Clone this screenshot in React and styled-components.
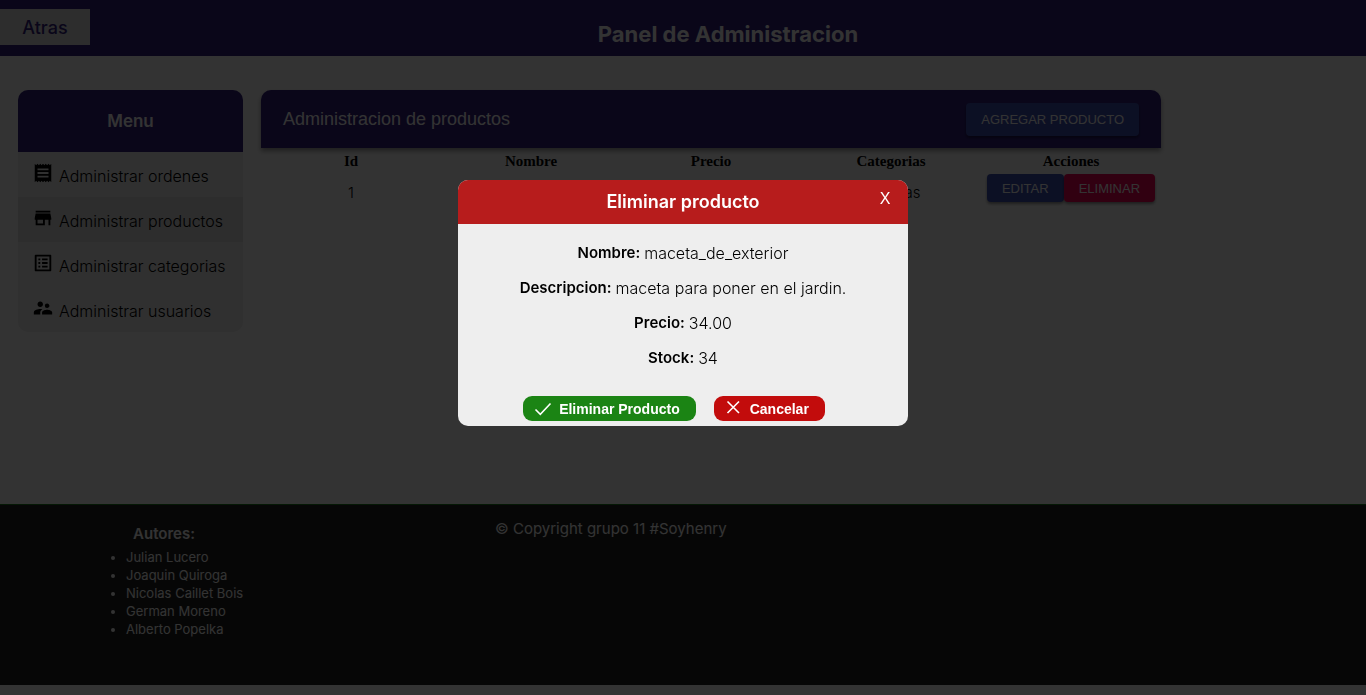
import React, { useState } from "react";
import styled, { createGlobalStyle, css } from "styled-components";
import { MdReceipt, MdStore, MdListAlt, MdSupervisorAccount } from "react-icons/md";

const indigo = "#33207f";
const geometric = '"Inter", "Open Sans", sans-serif';
const grotesque = '"Liberation Sans", Arial, sans-serif';

const GlobalStyle = createGlobalStyle`
  *, *::before, *::after { box-sizing: border-box; }
  body {
    margin: 0;
    background: #fff;
    color: #000;
    font-family: ${geometric};
    font-size: 15px;
    font-weight: 300;
  }
  h1, h2, h3, p, ul, dl, dd { margin: 0; padding: 0; }
  button { border: 0; padding: 0; margin: 0; cursor: pointer; }
`;

const Page = styled.div`
  display: flex;
  flex-direction: column;
  min-height: 100vh;
  padding-bottom: 10px;
`;

const TopBar = styled.header`
  display: flex;
  align-items: flex-start;
  height: 56px;
  padding-top: 9px;
  background: ${indigo};
`;

const BackButton = styled.button`
  flex: none;
  width: 90px;
  height: 36px;
  background: #e0e0e0;
  color: ${indigo};
  font-family: ${geometric};
  font-size: 18px;
  font-weight: 500;
`;

const PageTitle = styled.h1`
  flex: 1;
  padding-top: 9px;
  color: #fff;
  font-size: 22px;
  line-height: 32px;
  font-weight: 700;
  text-align: center;
`;

const Main = styled.main`
  display: flex;
  flex: 1;
  align-items: flex-start;
  gap: 18px;
  padding: 34px 18px;
`;

const Sidebar = styled.nav`
  flex: none;
  width: 225px;
  overflow: hidden;
  border-radius: 10px;
  background: #eee;
`;

const SidebarTitle = styled.h2`
  background: ${indigo};
  color: #fff;
  font-size: 17px;
  line-height: 62px;
  font-weight: 600;
  text-align: center;
`;

const MenuList = styled.ul`
  list-style: none;
`;

const MenuLink = styled.a`
  display: flex;
  align-items: center;
  gap: 5px;
  height: 45px;
  padding-left: 14px;
  background: ${(p) => (p.$active ? "#dedede" : "transparent")};
  color: #000;
  font-size: 16px;
  text-decoration: none;

  svg {
    flex: none;
    margin-bottom: 3px;
    font-size: 22px;
  }
  span { padding-top: 2px; }
`;

const Panel = styled.section`
  flex: 0 1 900px;
`;

const PanelHeader = styled.div`
  display: flex;
  align-items: center;
  justify-content: space-between;
  height: 58px;
  padding: 0 22px;
  border-radius: 10px 10px 0 0;
  background: ${indigo};
  box-shadow: 0 3px 5px rgba(0, 0, 0, 0.4);
`;

const PanelTitle = styled.h2`
  color: #fff;
  font-family: ${grotesque};
  font-size: 18px;
  font-weight: 400;
`;

const ActionButton = styled.button`
  height: ${(p) => (p.$large ? "33px" : "28px")};
  padding: 0 15px;
  border-radius: 4px;
  background: ${(p) => (p.$danger ? "#f50057" : "#3f51b5")};
  color: #fff;
  font-family: ${grotesque};
  font-size: 13px;
  text-transform: uppercase;
  box-shadow: 0 2px 3px rgba(0, 0, 0, 0.4);
`;

const Table = styled.table`
  width: 100%;
  table-layout: fixed;
  border-collapse: collapse;

  th {
    height: 26px;
    padding: 0;
    font-family: "Liberation Serif", serif;
    font-size: 15px;
    font-weight: 700;
  }
  td {
    height: 32px;
    padding: 0;
    text-align: center;
    vertical-align: top;
    line-height: 38px;
  }
`;

const RowActions = styled.div`
  display: flex;
  justify-content: center;
`;

const Footer = styled.footer`
  display: flex;
  height: 181px;
  border-top: 1px solid #1b7a1b;
  background: #212121;
  color: #fff;
  font-weight: 400;
`;

const Authors = styled.section`
  width: 328px;
  padding: 17px 0 0 108px;

  h3 {
    width: 112px;
    font-size: 15px;
    line-height: 24px;
    font-weight: 600;
    text-align: center;
  }
  ul {
    padding: 2px 0 0 18px;
    font-size: 13px;
    line-height: 18px;
  }
`;

const Copyright = styled.p`
  padding: 12px 0 0 167px;
  line-height: 24px;
`;

const Backdrop = styled.div`
  position: fixed;
  inset: 0;
  display: flex;
  align-items: flex-start;
  justify-content: center;
  padding-top: 180px;
  background: rgba(0, 0, 0, 0.8);
`;

const Dialog = styled.section`
  position: relative;
  width: 450px;
  overflow: hidden;
  border-radius: 10px;
  background: #eee;
`;

const DialogTitle = styled.h2`
  background: #b71c1c;
  color: #fff;
  font-size: 18px;
  line-height: 44px;
  font-weight: 600;
  text-align: center;
`;

const CloseButton = styled.button`
  position: absolute;
  top: 9px;
  right: 13px;
  width: 20px;
  height: 20px;
  background: transparent;
  color: #fff;
  font-family: ${grotesque};
  font-size: 16px;
`;

const Details = styled.dl`
  display: grid;
  gap: 11px;
  padding: 17px 0 26px;
  line-height: 24px;

  div {
    display: flex;
    justify-content: center;
    gap: 4px;
  }
  dt { font-weight: 600; }
  dd { font-size: 16px; }
`;

const DialogActions = styled.div`
  display: flex;
  justify-content: center;
  gap: 18px;
  padding: 0 18px 5px 0;
`;

const PillButton = styled.button`
  display: flex;
  align-items: center;
  gap: 6px;
  height: 25px;
  padding: 0 16px 0 10px;
  border-radius: 9px;
  color: #fff;
  font-family: ${grotesque};
  font-size: 14px;
  font-weight: 700;
  ${(p) => (p.$tone === "confirm"
    ? css`background: #1b8414;`
    : css`background: #c20c0c;`)}

  svg {
    width: 20px;
    height: 20px;
    fill: none;
    stroke: currentColor;
  }
`;

const menu = [
  { label: "Administrar ordenes", Icon: MdReceipt },
  { label: "Administrar productos", Icon: MdStore, active: true },
  { label: "Administrar categorias", Icon: MdListAlt },
  { label: "Administrar usuarios", Icon: MdSupervisorAccount },
];

const product = {
  id: 1,
  name: "maceta_de_exterior",
  description: "maceta para poner en el jardin.",
  price: "34.00",
  stock: 34,
  category: "macetas",
};

const authors = [
  "Julian Lucero",
  "Joaquin Quiroga",
  "Nicolas Caillet Bois",
  "German Moreno",
  "Alberto Popelka",
];

function DeleteDialog({ item, onClose }) {
  const fields = [
    ["Nombre:", item.name],
    ["Descripcion:", item.description],
    ["Precio:", item.price],
    ["Stock:", item.stock],
  ];
  return (
    <Backdrop>
      <Dialog role="dialog" aria-modal="true" aria-labelledby="delete-title">
        <DialogTitle id="delete-title">Eliminar producto</DialogTitle>
        <CloseButton type="button" onClick={onClose}>X</CloseButton>
        <Details>
          {fields.map(([term, value]) => (
            <div key={term}>
              <dt>{term}</dt>
              <dd>{value}</dd>
            </div>
          ))}
        </Details>
        <DialogActions>
          <PillButton type="button" $tone="confirm" onClick={onClose}>
            <svg viewBox="0 0 20 20" strokeWidth="1.6" aria-hidden="true"><path d="M2.5 10.5 L7.3 15.3 L17.5 4.5" /></svg>
            Eliminar Producto
          </PillButton>
          <PillButton type="button" $tone="cancel" onClick={onClose}>
            <svg viewBox="0 0 20 20" strokeWidth="1.6" aria-hidden="true"><path d="M3.5 2.5 L15 14 M15 2.5 L3.5 14" /></svg>
            Cancelar
          </PillButton>
        </DialogActions>
      </Dialog>
    </Backdrop>
  );
}

export default function App() {
  const [open, setOpen] = useState(true);
  return (
    <>
      <GlobalStyle />
      <Page>
        <TopBar>
          <BackButton type="button">Atras</BackButton>
          <PageTitle>Panel de Administracion</PageTitle>
        </TopBar>
        <Main>
          <Sidebar>
            <SidebarTitle>Menu</SidebarTitle>
            <MenuList>
              {menu.map(({ label, Icon, active }) => (
                <li key={label}>
                  <MenuLink href="#" $active={active}>
                    <Icon aria-hidden="true" />
                    <span>{label}</span>
                  </MenuLink>
                </li>
              ))}
            </MenuList>
          </Sidebar>
          <Panel>
            <PanelHeader>
              <PanelTitle>Administracion de productos</PanelTitle>
              <ActionButton type="button" $large>Agregar producto</ActionButton>
            </PanelHeader>
            <Table>
              <thead>
                <tr>
                  <th>Id</th>
                  <th>Nombre</th>
                  <th>Precio</th>
                  <th>Categorias</th>
                  <th>Acciones</th>
                </tr>
              </thead>
              <tbody>
                <tr>
                  <td>{product.id}</td>
                  <td>{product.name}</td>
                  <td>{product.price}</td>
                  <td>{product.category}</td>
                  <td>
                    <RowActions>
                      <ActionButton type="button">Editar</ActionButton>
                      <ActionButton type="button" $danger onClick={() => setOpen(true)}>Eliminar</ActionButton>
                    </RowActions>
                  </td>
                </tr>
              </tbody>
            </Table>
          </Panel>
        </Main>
        <Footer>
          <Authors>
            <h3>Autores:</h3>
            <ul>
              {authors.map((name) => <li key={name}>{name}</li>)}
            </ul>
          </Authors>
          <Copyright>© Copyright grupo 11 #Soyhenry</Copyright>
        </Footer>
      </Page>
      {open && <DeleteDialog item={product} onClose={() => setOpen(false)} />}
    </>
  );
}
